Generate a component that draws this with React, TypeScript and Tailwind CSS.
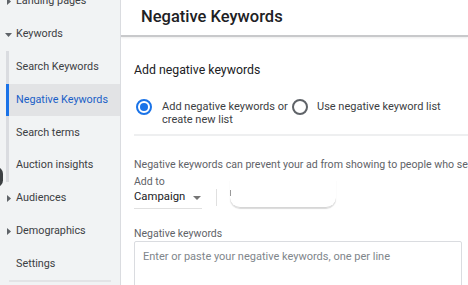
const navItems = [
  { label: "Search Keywords" },
  { label: "Negative Keywords", active: true },
  { label: "Search terms" },
  { label: "Auction insights" },
];

function Caret({ dir }: { dir: "down" | "right" }) {
  return dir === "down" ? (
    <svg width="7" height="4" viewBox="0 0 7 4" className="fill-[#5f6368]">
      <path d="M0 0h7L3.5 4z" />
    </svg>
  ) : (
    <svg width="4" height="7" viewBox="0 0 4 7" className="fill-[#5f6368]">
      <path d="M0 0v7l4-3.5z" />
    </svg>
  );
}

function Sidebar() {
  return (
    <div className="relative w-[121px] shrink-0 h-full bg-[#f1f3f4] border-r border-[#dadce0] text-[10.8px] text-[#3c4043] overflow-hidden whitespace-nowrap">
      {/* 上面被截掉的一项 */}
      <div className="h-[33px] -mt-[15px] flex items-center">
        <span className="w-[16px] flex justify-center pl-[1px]"><Caret dir="right" /></span>
        <span>Landing pages</span>
      </div>
      <div className="h-[33px] flex items-center">
        <span className="w-[16px] flex justify-center pl-[1px]"><Caret dir="down" /></span>
        <span>Keywords</span>
      </div>

      {/* 子项 */}
      <div className="ml-[6px] border-l-[3px] border-[#dadce0]">
        {navItems.map((item) => (
          <div
            key={item.label}
            className={`h-[32.7px] flex items-center pl-[7px] -ml-[3px] border-l-[3px] ${
              item.active ? "bg-[#e2e3e5] border-[#1a73e8] text-[#1a5fc7]" : "border-transparent"
            }`}
          >
            {item.label}
          </div>
        ))}
      </div>

      <div className="h-[33px] flex items-center">
        <span className="w-[16px] flex justify-center pl-[1px]"><Caret dir="right" /></span>
        <span>Audiences</span>
      </div>
      <div className="h-[32.5px] flex items-center">
        <span className="w-[16px] flex justify-center pl-[1px]"><Caret dir="right" /></span>
        <span>Demographics</span>
      </div>
      <div className="h-[33px] flex items-center pl-[16px]">Settings</div>
      <div className="mx-[9px] h-[2px] bg-[#e3e4e6]" />

      {/* 左边缘露出的悬浮按钮 */}
      <div className="absolute -left-[10px] top-[167px] w-[13px] h-[20px] rounded-full bg-[#3c4043]" />
    </div>
  );
}

function Radio({ checked }: { checked?: boolean }) {
  return (
    <span
      className={`w-[16px] h-[16px] shrink-0 rounded-full border-2 flex items-center justify-center ${
        checked ? "border-[#1a73e8]" : "border-[#5f6368]"
      }`}
    >
      {checked && <span className="w-[8px] h-[8px] rounded-full bg-[#1a73e8]" />}
    </span>
  );
}

function Main() {
  return (
    <div className="flex-1 min-w-0 h-full flex flex-col bg-white">
      {/* 标题栏 */}
      <div className="h-[37px] shrink-0 border-b-2 border-[#c8c9cb] shadow-[0_1px_2px_rgba(0,0,0,0.08)] pl-[20px] flex items-center">
        <h1 className="text-[16.5px] font-medium text-[#202124] whitespace-nowrap">Negative Keywords</h1>
      </div>

      <div className="pl-[13px] overflow-hidden flex-1">
        <div className="pt-[24px] text-[12.3px] text-[#202124] whitespace-nowrap">Add negative keywords</div>

        {/* 单选 */}
        <div className="mt-[21px] flex items-start text-[11px] text-[#3c4043] leading-[13px] pl-[2px] whitespace-nowrap">
          <label className="flex items-start gap-[10px] w-[156px] shrink-0">
            <span className="-mt-[1px]"><Radio checked /></span>
            <span>Add negative keywords or<br />create new list</span>
          </label>
          <label className="flex items-start gap-[9px]">
            <span className="-mt-[1px]"><Radio /></span>
            <span>Use negative keyword list</span>
          </label>
        </div>

        <div className="mt-[8px] h-[2px] bg-[#eeeff0]" />

        <p className="mt-[21px] text-[10.6px] text-[#5f6368] whitespace-nowrap">
          Negative keywords can prevent your ad from showing to people who search for things your business doesn't offer
        </p>

        {/* 添加到 */}
        <div className="mt-[1px] text-[10.5px] text-[#5f6368]">Add to</div>
        <div className="flex items-end -mt-[10px]">
          <div className="w-[68px] h-[22px] border-b border-[#e0e0e0] flex items-center gap-[8px] text-[11.3px] text-[#202124]">
            <span>Campaign</span>
            <svg width="8" height="4" viewBox="0 0 8 4" className="fill-[#757575]"><path d="M0 0h8L4 4z" /></svg>
          </div>
          <div className="ml-[14px] mb-[3px] w-[1px] h-[17px] bg-[#e0e0e0]" />
          <div className="ml-[13px] mb-[1px] w-[106px] h-[28px] rounded-b-[10px] border-b border-[#d6d6d6] shadow-[0_1px_1px_rgba(0,0,0,0.15)] relative">
            <span className="absolute left-0 top-[10px] w-[1px] h-[6px] bg-[#9a9a9a]" />
          </div>
        </div>

        <div className="mt-[17px] text-[10.5px] text-[#5f6368]">Negative keywords</div>
        <div className="-mt-[1px] mr-[6px] h-[60px] border border-[#dadce0] rounded-[2px] px-[8px] pt-[7px] text-[11px] text-[#80868b] whitespace-nowrap">
          Enter or paste your negative keywords, one per line
        </div>
      </div>
    </div>
  );
}

export default function App() {
  return (
    <div className="w-[468px] h-[285px] flex overflow-hidden bg-white" style={{ fontFamily: "Roboto, 'Noto Sans', sans-serif" }}>
      <Sidebar />
      <Main />
    </div>
  );
}
